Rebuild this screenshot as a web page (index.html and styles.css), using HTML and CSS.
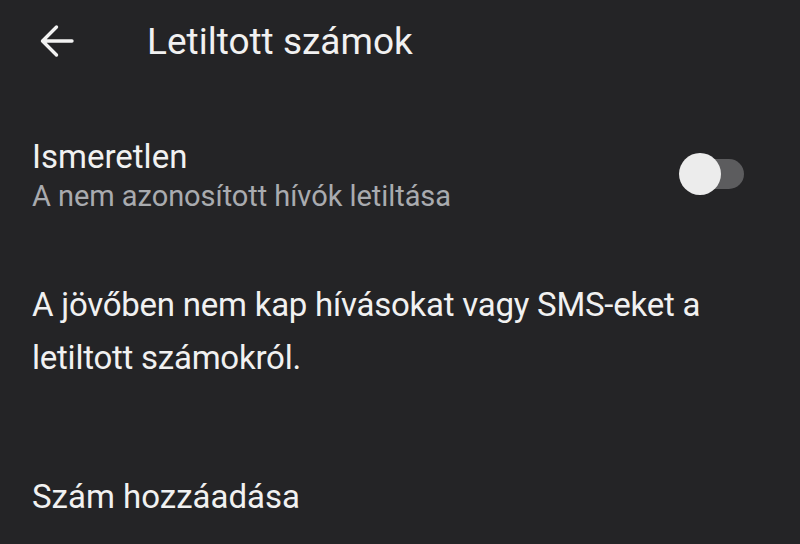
FILE: index.html
```html
<!DOCTYPE html>
<html lang="hu">
<head>
<meta charset="utf-8">
<link rel="stylesheet" href="styles.css">
</head>
<body>
<div class="screen">
  <header class="appbar">
    <svg class="back" width="34" height="34" viewBox="0 0 34 34" aria-hidden="true">
      <path d="M32 17H3M16.5 3L2.5 17L16.5 31" fill="none" stroke="#f2f2f2" stroke-width="3.4" stroke-linecap="round" stroke-linejoin="round"/>
    </svg>
    <h1 class="title">Letiltott számok</h1>
  </header>
  <section class="setting">
    <div class="setting-text">
      <div class="setting-title">Ismeretlen</div>
      <div class="setting-sub">A nem azonosított hívók letiltása</div>
    </div>
    <div class="switch">
      <span class="track"></span>
      <span class="thumb"></span>
    </div>
  </section>
  <p class="info">A jövőben nem kap hívásokat vagy SMS-eket a letiltott számokról.</p>
  <div class="add">Szám hozzáadása</div>
</div>
</body>
</html>
```
FILE: styles.css
```css
html, body {
  margin: 0;
  padding: 0;
  background: #242426;
}
.screen {
  width: 800px;
  height: 544px;
  overflow: hidden;
  background: #242426;
  color: #f1f1f1;
  font-family: Roboto, "Noto Sans", sans-serif;
}
.appbar {
  height: 84px;
  display: flex;
  align-items: center;
  padding-left: 40px;
}
.back {
  display: block;
  margin-top: -2px;
}
.title {
  margin: 0 0 0 73px;
  font-size: 37px;
  font-weight: 400;
  line-height: 84px;
}
.setting {
  display: flex;
  align-items: center;
  padding: 53px 56px 0 32px;
}
.setting-text {
  flex: 1;
}
.setting-title {
  font-size: 33px;
  line-height: 40px;
}
.setting-sub {
  font-size: 29px;
  line-height: 38px;
  color: #a9abaf;
  letter-spacing: -0.05px;
}
.switch {
  position: relative;
  width: 65px;
  height: 42px;
  margin-top: -5px;
}
.track {
  position: absolute;
  left: 10px;
  top: 6px;
  width: 55px;
  height: 30px;
  border-radius: 15px;
  background: #5c5c5e;
}
.thumb {
  position: absolute;
  left: 0;
  top: 0;
  width: 42px;
  height: 42px;
  border-radius: 50%;
  background: #ececec;
}
.info {
  margin: 63px 60px 0 32px;
  font-size: 33px;
  line-height: 53px;
  letter-spacing: -0.24px;
}
.add {
  margin: 86px 0 0 32px;
  font-size: 33px;
  line-height: 53px;
}
```
